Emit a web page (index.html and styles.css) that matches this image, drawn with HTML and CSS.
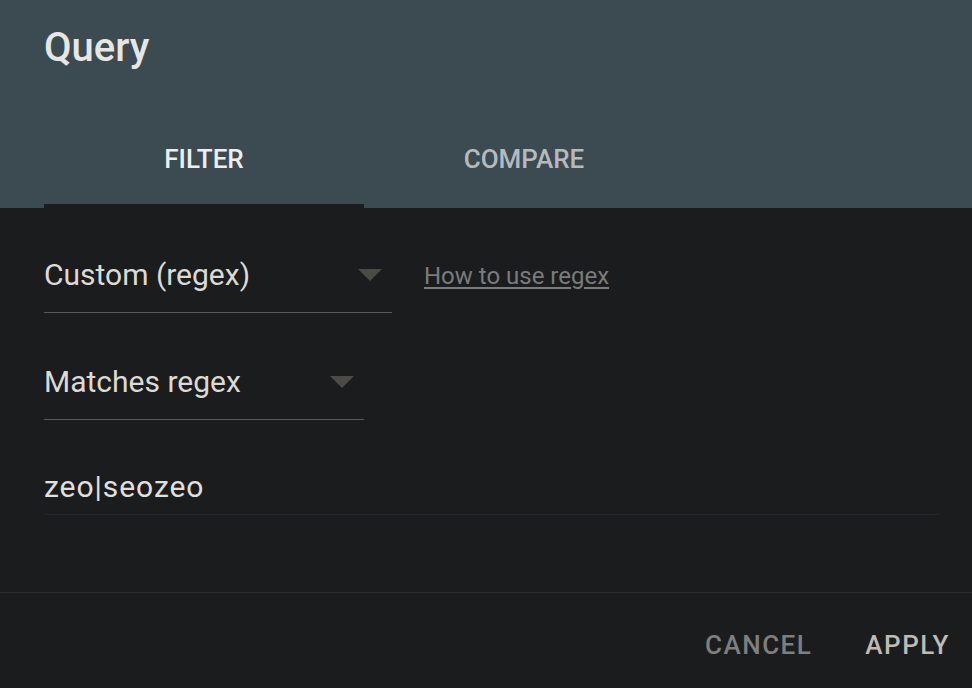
FILE: index.html
```html
<!DOCTYPE html>
<html>
<head>
<meta charset="utf-8">
<link rel="stylesheet" href="styles.css">
</head>
<body>
<div class="dialog">
  <header class="header">
    <h1 class="title">Query</h1>
    <nav class="tabs">
      <div class="tab active">FILTER</div>
      <div class="tab">COMPARE</div>
    </nav>
  </header>
  <main class="content">
    <div class="row">
      <div class="select select-wide">
        <span class="select-text">Custom (regex)</span>
        <svg class="caret" width="24" height="12" viewBox="0 0 24 12"><polygon points="0,0 24,0 12,12" fill="#4b4a45"/></svg>
      </div>
      <a class="help-link" href="#">How to use regex</a>
    </div>
    <div class="row row-second">
      <div class="select select-narrow">
        <span class="select-text">Matches regex</span>
        <svg class="caret" width="24" height="12" viewBox="0 0 24 12"><polygon points="0,0 24,0 12,12" fill="#4b4a45"/></svg>
      </div>
    </div>
    <div class="input-field">
      <span class="input-text">zeo|seozeo</span>
    </div>
  </main>
  <footer class="footer">
    <button class="btn btn-cancel">CANCEL</button>
    <button class="btn btn-apply">APPLY</button>
  </footer>
</div>
</body>
</html>
```

FILE: styles.css
```css
html, body {
  margin: 0;
  padding: 0;
  background: #1b1c1e;
}

body {
  font-family: Roboto, "Liberation Sans", sans-serif;
  width: 972px;
  height: 688px;
  overflow: hidden;
}

.dialog {
  display: flex;
  flex-direction: column;
  height: 688px;
}

.header {
  background: #3c4a51;
  height: 208px;
  padding: 0 44px;
  box-sizing: border-box;
}

.title {
  margin: 28px 0 0;
  font-size: 40px;
  line-height: 40px;
  font-weight: 500;
  color: #e8e6e3;
}

.tabs {
  display: flex;
}

.tab {
  width: 320px;
  box-sizing: border-box;
  padding-top: 78px;
  padding-bottom: 32px;
  height: 140px;
  font-size: 26px;
  line-height: 26px;
  font-weight: 500;
  text-align: center;
  color: #b6babd;
  border-bottom: 4px solid transparent;
}

.tab.active {
  color: #eeeeee;
  border-bottom-color: #1b1c1e;
}

.content {
  flex: 1;
  padding: 0 32px 0 44px;
}

.row {
  display: flex;
  align-items: flex-start;
  padding-top: 52px;
}

.row-second {
  padding-top: 54px;
}

.select {
  display: flex;
  align-items: flex-start;
  padding-bottom: 22px;
  border-bottom: 1px solid #5b5852;
}

.select-wide {
  width: 348px;
}

.select-narrow {
  width: 320px;
}

.select-text {
  flex: 1;
  font-size: 30px;
  line-height: 30px;
  color: #dcdad5;
}

.caret {
  display: block;
  margin-top: 9px;
  margin-right: 10px;
}

.help-link {
  margin-left: 32px;
  margin-top: 1px;
  font-size: 24px;
  line-height: 30px;
  color: #7b7b7b;
  text-decoration: underline;
  text-underline-offset: 3px;
}

.input-field {
  margin-top: 52px;
  width: 896px;
  padding-bottom: 12px;
  border-bottom: 1px solid #242528;
}

.input-text {
  display: block;
  font-size: 30px;
  line-height: 30px;
  letter-spacing: 0.95px;
  color: #e2e0dc;
}

.footer {
  border-top: 1px solid #2b2d2a;
  display: flex;
  justify-content: flex-end;
  align-items: flex-start;
  gap: 53px;
  padding: 39px 22px 0 0;
  height: 96px;
  box-sizing: border-box;
}

.btn {
  background: none;
  border: none;
  padding: 0;
  margin: 0;
  font-family: Roboto, "Liberation Sans", sans-serif;
  font-size: 26px;
  line-height: 26px;
  font-weight: 500;
  letter-spacing: 1.5px;
}

.btn-cancel {
  color: #7f7f7f;
}

.btn-apply {
  color: #bfbab2;
}
```
